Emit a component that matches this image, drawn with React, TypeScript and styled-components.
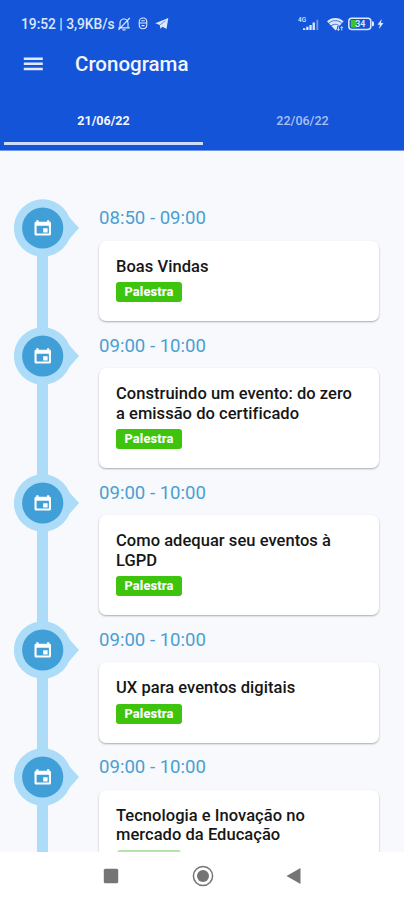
import React from "react";
import styled, { createGlobalStyle } from "styled-components";

const Global = createGlobalStyle`
  * { box-sizing: border-box; }
  body { margin: 0; background: #fff; font-family: Roboto, "Liberation Sans", sans-serif; }
`;

const Screen = styled.div`
  width: 404px;
  height: 900px;
  display: flex;
  flex-direction: column;
  overflow: hidden;
  background: #fff;
`;

const Header = styled.header`
  height: 151px;
  flex: none;
  display: flex;
  flex-direction: column;
  background: #1454d8;
  border-bottom: 1px solid #6f97e6;
  color: #f2f5ff;
`;

const StatusBar = styled.div`
  height: 38px;
  padding: 9px 20px 0 21px;
  display: flex;
  align-items: center;
  justify-content: space-between;
  color: #dce6fc;
`;

const StatusGroup = styled.div<{ $gap: number }>`
  display: flex;
  align-items: center;
  gap: ${(p) => p.$gap}px;
`;

const StatusText = styled.span`
  width: 89px;
  font-size: 13.8px;
  font-weight: 500;
  line-height: 16px;
  letter-spacing: -0.02px;
  white-space: pre;
`;

const TitleBar = styled.div`
  height: 52px;
  padding-left: 23px;
  display: flex;
  align-items: center;
  gap: 31px;
`;

const PageTitle = styled.h1`
  margin: 0;
  font-size: 20.5px;
  font-weight: 500;
  line-height: 26px;
  letter-spacing: 0;
`;

const Tabs = styled.nav`
  height: 60px;
  padding: 0 4px 5px;
  display: grid;
  grid-template-columns: 199px 199px;
`;

const Tab = styled.div<{ $active?: boolean }>`
  display: flex;
  align-items: center;
  justify-content: center;
  padding-top: 12px;
  padding-bottom: 4px;
  font-size: 12.5px;
  font-weight: ${(p) => (p.$active ? 700 : 500)};
  color: ${(p) => (p.$active ? "#f4f7ff" : "#a9c0f2")};
  border-bottom: 3px solid ${(p) => (p.$active ? "#cfddfa" : "transparent")};
`;

const Timeline = styled.main`
  height: 701px;
  flex: none;
  overflow: hidden;
  padding: 48px 25px 0 14px;
  background: #f7f9fd;
`;

const Entry = styled.article`
  display: grid;
  grid-template-columns: 85px 280px;
`;

const Rail = styled.div`
  display: flex;
  flex-direction: column;
`;

const Marker = styled.svg`
  display: block;
  flex: none;
  width: 66px;
  height: 58px;
`;

const Line = styled.div`
  width: 11px;
  flex: 1;
  margin: -2px 0 -2px 23px;
  background: #addcf9;
`;

const Content = styled.div`
  padding-bottom: 5.5px;
`;

const Time = styled.div`
  height: 41.5px;
  padding-top: 8px;
  font-size: 18.6px;
  line-height: 22px;
  color: #4a9fd3;
`;

const Card = styled.section`
  padding: 16px 16px 19.1px 17px;
  border-radius: 7px;
  background: #fff;
  box-shadow: 0 1px 2px rgba(0, 0, 0, 0.32);
`;

const CardTitle = styled.h2`
  margin: 0 0 6px;
  font-size: 16.5px;
  font-weight: 500;
  line-height: 19.5px;
  letter-spacing: 0.04px;
  color: #161616;
  white-space: pre-line;
`;

const Badge = styled.span`
  display: flex;
  align-items: center;
  justify-content: center;
  width: 66px;
  height: 20px;
  padding-bottom: 1px;
  border-radius: 3px;
  background: #3ec40c;
  color: #fff;
  font-size: 12.8px;
  font-weight: 800;
  letter-spacing: 0.15px;
`;

const BadgeEdge = styled.div`
  width: 64px;
  height: 20px;
  margin: -1px 0 0 1px;
  border-radius: 3px;
  background: #b5e3a8;
`;

const NavBar = styled.footer`
  height: 48px;
  display: flex;
  align-items: center;
  padding-left: 103px;
  gap: 72.5px;
  background: #fff;
`;

const MutedBell = () => (
  <svg width="14" height="14" viewBox="0 0 14 14" fill="none" stroke="currentColor" strokeWidth="1.2">
    <path d="M3 10.5V6.2C3 3.8 4.8 2 7 2s4 1.8 4 4.2v4.3M1.3 10.8h11.4M5.5 12.8h3M12.8 1L1.5 12.8" />
  </svg>
);

const Mouse = () => (
  <svg width="10" height="13" viewBox="0 0 10 13" fill="none" stroke="currentColor" strokeWidth="1.1">
    <path d="M1.2 5c0-2.5 1.6-4 3.8-4s3.8 1.5 3.8 4v2.5c0 2.5-1.3 4.2-3.8 4.2S1.2 10 1.2 7.5zM1.2 6h7.6M3.2 3.7h3.6M3.5 8.6h3" />
  </svg>
);

const Plane = () => (
  <svg width="14" height="13" viewBox="0 0 14 13" fill="currentColor">
    <path d="M.3 6.3L13.3 1l-1.8 11-4-2.2-2.2 1.9-.5-3.6z" />
    <path d="M4.8 8l5.6-4.2" stroke="#1454d8" strokeWidth=".6" />
  </svg>
);

const Signal = () => (
  <svg width="25" height="16" viewBox="0 0 25 16" fill="currentColor">
    <text x="0" y="6.4" fontSize="6.5" fontWeight="500">4G</text>
    <path d="M5 12.2h2.3v1.9H5zM8.2 10.8h2.3v3.3H8.2zM11.4 9h2.3v5.1h-2.3zM14.6 6.4h2.3v7.7h-2.3z" />
    <path d="M18.4 3.8h1.9v10.3h-1.9z" opacity=".45" />
  </svg>
);

const Wifi = () => (
  <svg width="19" height="16" viewBox="0 0 19 16">
    <path d="M1 5.3C5.3.8 13.3.8 17.6 5.3L9.5 14.5z" fill="currentColor" />
    <path d="M2.7 7.3c3.7-3.6 9.6-3.6 13.2 0M5 10c2.6-2.3 6-2.3 8.6 0" fill="none" stroke="#1454d8" strokeWidth=".8" />
    <path d="M11 10.2h6V15h-6z" fill="#1454d8" />
    <path d="M12.4 10.7v3.8m-1.3-1.3 1.3 1.3 1.3-1.3M15.7 14.5v-3.8m-1.3 1.3 1.3-1.3 1.3 1.3" fill="none" stroke="currentColor" strokeWidth=".9" />
  </svg>
);

const Battery = () => (
  <svg width="26" height="14" viewBox="0 0 26 14">
    <rect x=".8" y="1.2" width="22" height="11.2" rx="2.8" fill="none" stroke="currentColor" strokeWidth="1.5" />
    <path d="M24 4.3h.5a1.5 1.5 0 0 1 1.5 1.5v2a1.5 1.5 0 0 1-1.5 1.5H24z" fill="currentColor" />
    <path d="M2.7 3h6v7.6h-6z" fill="#3cc52a" />
    <text x="12.2" y="10" fontSize="8.8" fontWeight="700" fill="currentColor" textAnchor="middle">34</text>
  </svg>
);

const Bolt = () => (
  <svg width="7" height="10" viewBox="0 0 7 10" fill="currentColor">
    <path d="M4.7 0L.5 5.7h2.4L2 10l4.5-6H4z" />
  </svg>
);

const MenuIcon = () => (
  <svg width="21" height="16" viewBox="0 0 21 16" fill="#e0e8fc">
    <path d="M.8 1.4h19v2.5H.8zM.8 6.6h19v2.5H.8zM.8 11.8h19v2.5H.8z" />
  </svg>
);

const EventMarker = () => (
  <Marker viewBox="0 0 66 58">
    <path d="M51 13.5L65 29 51 45z" fill="#addcf9" />
    <circle cx="28.7" cy="29" r="28.8" fill="#addcf9" />
    <circle cx="28.7" cy="29" r="20.6" fill="#419fd8" />
    <path
      fill="#fff"
      fillRule="evenodd"
      d="M22.3 21.3h2.2v1.5h8.6v-1.5h2.2v1.5h.2c.9 0 1.5.6 1.5 1.5v10.8c0 .9-.6 1.5-1.5 1.5H22c-.9 0-1.5-.6-1.5-1.5V24.3c0-.9.6-1.5 1.5-1.5h.3zM22.6 26.8v7.8h12.3v-7.8z"
    />
    <path d="M29.2 29.2h4.4v4.2h-4.4z" fill="#fff" />
  </Marker>
);

const entries = [
  { time: "08:50 - 09:00", title: "Boas Vindas", tag: "Palestra" },
  { time: "09:00 - 10:00", title: "Construindo um evento: do zero\na emissão do certificado", tag: "Palestra" },
  { time: "09:00 - 10:00", title: "Como adequar seu eventos à\nLGPD", tag: "Palestra" },
  { time: "09:00 - 10:00", title: "UX para eventos digitais", tag: "Palestra" },
  { time: "09:00 - 10:00", title: "Tecnologia e Inovação no\nmercado da Educação" },
];

export default function App() {
  return (
    <Screen>
      <Global />
      <Header>
        <StatusBar>
          <StatusGroup $gap={7}>
            <StatusText>19:52 | 3,9KB/s</StatusText>
            <MutedBell />
            <Mouse />
            <Plane />
          </StatusGroup>
          <StatusGroup $gap={3}>
            <Signal />
            <Wifi />
            <Battery />
            <Bolt />
          </StatusGroup>
        </StatusBar>
        <TitleBar>
          <MenuIcon />
          <PageTitle>Cronograma</PageTitle>
        </TitleBar>
        <Tabs>
          <Tab $active>21/06/22</Tab>
          <Tab>22/06/22</Tab>
        </Tabs>
      </Header>
      <Timeline>
        {entries.map((entry, i) => (
          <Entry key={i}>
            <Rail>
              <EventMarker />
              <Line />
            </Rail>
            <Content>
              <Time>{entry.time}</Time>
              <Card>
                <CardTitle>{entry.title}</CardTitle>
                {entry.tag ? <Badge>{entry.tag}</Badge> : <BadgeEdge />}
              </Card>
            </Content>
          </Entry>
        ))}
      </Timeline>
      <NavBar>
        <svg width="16" height="16" viewBox="0 0 16 16">
          <rect x=".8" y=".8" width="14.4" height="14.4" rx="1.5" fill="#757575" />
        </svg>
        <svg width="22" height="22" viewBox="0 0 22 22">
          <circle cx="11" cy="11" r="9.6" fill="none" stroke="#757575" strokeWidth="1.5" />
          <circle cx="11" cy="11" r="6" fill="#757575" />
        </svg>
        <svg width="16" height="18" viewBox="0 0 16 18">
          <path d="M14.5 1v16L.5 9z" fill="#757575" />
        </svg>
      </NavBar>
    </Screen>
  );
}
